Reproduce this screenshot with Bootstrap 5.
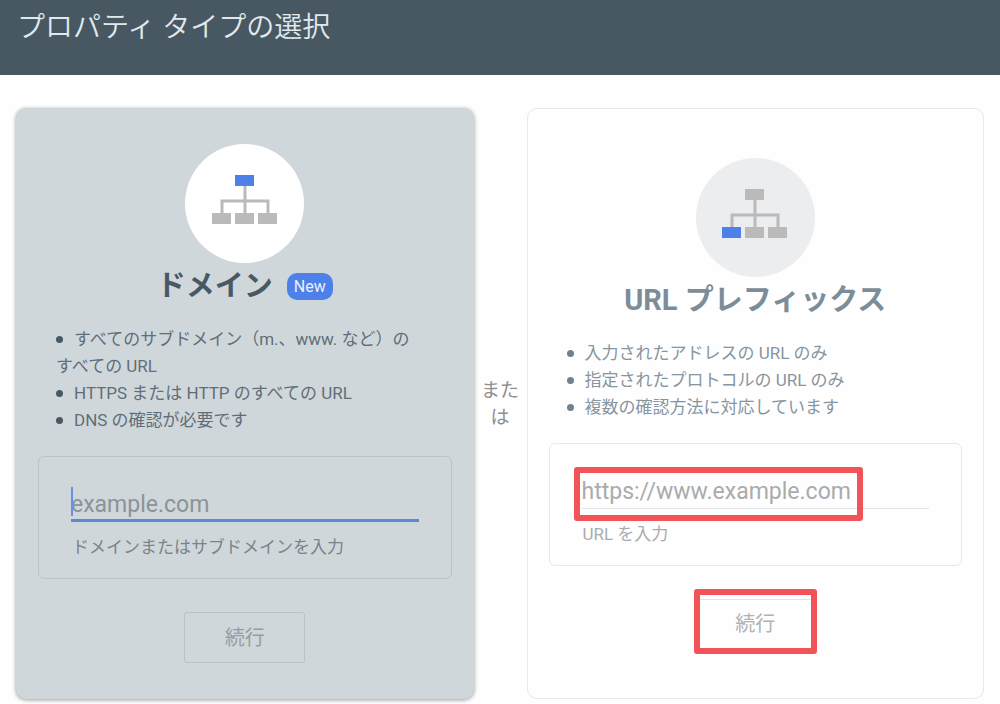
<!DOCTYPE html>
<html lang="ja">
<head>
<meta charset="utf-8">
<meta name="viewport" content="width=device-width, initial-scale=1">
<title>プロパティ タイプの選択</title>
<link href="https://cdn.jsdelivr.net/npm/bootstrap@5.3.0/dist/css/bootstrap.min.css" rel="stylesheet">
<style>
  body { font-family: Roboto, "Noto Sans CJK JP", sans-serif; font-size: 17px; line-height: 27px; color: #54646f; background: #fefefe; }
  .top-bar { background: #485863; height: 75px; padding: 6px 17px; }
  .top-bar h1 { font-size: 28px; line-height: 44px; font-weight: 350; color: #e1e9ee; }
  .chooser { padding: 33px 16px 5px; }
  .option { flex: 1 1 0; min-width: 0; padding: 35px 21px; border: 1px solid #e6e8e9; border-radius: 10px; background: #fefefe; color: #8795a0; }
  .option-active { background: #d0d7db; border-color: #d0d7db; color: #5f6e79; box-shadow: 0 1px 4px rgba(0,0,0,.4); }
  .disc { width: 119px; height: 119px; padding-bottom: 7px; background: #ebedef; }
  .option-active .disc { background: #fff; }
  .option h2 { font-size: 29px; line-height: 46px; font-weight: 700; color: #7b8d98; }
  .option-active h2 { gap: 14px; color: #485964; }
  .new-tag { font-size: 16px; line-height: 27px; font-weight: 400; padding: 0 7px; border-radius: 10px; background: #4e80ea; color: #eaf1ff; }
  .points { margin: 17px 0 22px; padding: 0 36px 0 18px; }
  .points li::before { content: ""; display: inline-block; width: 7px; height: 7px; margin-right: 11px; border-radius: 50%; background: #72828d; vertical-align: 2px; }
  .option-active .points li::before { background: #485964; }
  .entry { border: 1px solid #e6e8e9; border-radius: 6px; padding: 30px 32px 17px; margin-bottom: 33px; color: #a9acae; }
  .option-active .entry { border-color: #bcc3c7; color: #7b8388; }
  .entry input { height: 35px; padding: 2px 0 0; border: 0; border-bottom: 1px solid #e2e4e5; border-radius: 0; background: transparent; font-size: 23px; line-height: 30px; box-shadow: none; }
  .entry input::placeholder { color: #a9abad; opacity: 1; }
  .option-active .entry input { border-bottom: 3px solid #5f87dc; }
  .option-active .entry input::placeholder { color: #8b9398; }
  .entry label { margin-top: 12px; padding-left: 1px; }
  .text-caret { left: 0; top: 0; width: 2px; height: 29px; background: #6c8fe0; }
  .go { width: 121px; height: 51px; padding: 0; border: 1px solid #e2e4e5; border-radius: 3px; font-size: 20px; }
  .go:disabled { color: #b0b2b4; border-color: #e2e4e5; opacity: 1; }
  .option-active .go:disabled { color: #969ea3; border-color: #bac1c5; }
  .between { width: 53px; padding: 0 6px; font-size: 19px; color: #8e8f91; }
  .callout { border: 6px solid #f25358; border-radius: 3px; pointer-events: none; }
  .callout-url { inset: -7px auto -12px -8px; width: 289px; }
  .callout-go { inset: -10px -1px -4px; }
</style>
</head>
<body>
<header class="top-bar"><h1 class="m-0">プロパティ タイプの選択</h1></header>
<main class="chooser d-flex align-items-stretch">
  <section class="option option-active d-flex flex-column justify-content-center">
    <div class="disc rounded-circle mx-auto d-flex">
      <svg class="m-auto" width="66" height="50" viewBox="0 0 66 50" aria-hidden="true">
        <path d="M33 11v28M10 39V26h46v13" fill="none" stroke="#bababa" stroke-width="3"/>
        <path d="M0 38h19v11H0zM23 38h19v11H23zM46 38h19v11H46z" fill="#bababa"/>
        <path d="M23 0h19v11H23z" fill="#4e80ea"/>
      </svg>
    </div>
    <h2 class="m-0 d-flex justify-content-center align-items-center"><span>ドメイン</span><span class="new-tag">New</span></h2>
    <ul class="points list-unstyled">
      <li>すべてのサブドメイン（m.、www. など）のすべての URL</li>
      <li>HTTPS または HTTP のすべての URL</li>
      <li>DNS の確認が必要です</li>
    </ul>
    <div class="entry">
      <div class="position-relative">
        <input id="domain" class="form-control" type="text" placeholder="example.com">
        <span class="text-caret position-absolute"></span>
      </div>
      <label class="d-block" for="domain">ドメインまたはサブドメインを入力</label>
    </div>
    <div class="mx-auto d-flex"><button class="go btn" type="button" disabled>続行</button></div>
  </section>
  <div class="between flex-shrink-0 align-self-center text-center">または</div>
  <section class="option d-flex flex-column justify-content-center">
    <div class="disc rounded-circle mx-auto d-flex">
      <svg class="m-auto" width="66" height="50" viewBox="0 0 66 50" aria-hidden="true">
        <path d="M33 11v28M10 39V26h46v13" fill="none" stroke="#bababa" stroke-width="3"/>
        <path d="M23 0h19v11H23zM23 38h19v11H23zM46 38h19v11H46z" fill="#bababa"/>
        <path d="M0 38h19v11H0z" fill="#4e80ea"/>
      </svg>
    </div>
    <h2 class="m-0 text-center">URL プレフィックス</h2>
    <ul class="points list-unstyled">
      <li>入力されたアドレスの URL のみ</li>
      <li>指定されたプロトコルの URL のみ</li>
      <li>複数の確認方法に対応しています</li>
    </ul>
    <div class="entry">
      <div class="position-relative">
        <input id="prefix" class="form-control" type="text" placeholder="https://www.example.com">
        <span class="callout callout-url position-absolute"></span>
      </div>
      <label class="d-block" for="prefix">URL を入力</label>
    </div>
    <div class="mx-auto d-flex position-relative">
      <button class="go btn" type="button" disabled>続行</button>
      <span class="callout callout-go position-absolute"></span>
    </div>
  </section>
</main>
<script src="https://cdn.jsdelivr.net/npm/bootstrap@5.3.0/dist/js/bootstrap.bundle.min.js"></script>
</body>
</html>
